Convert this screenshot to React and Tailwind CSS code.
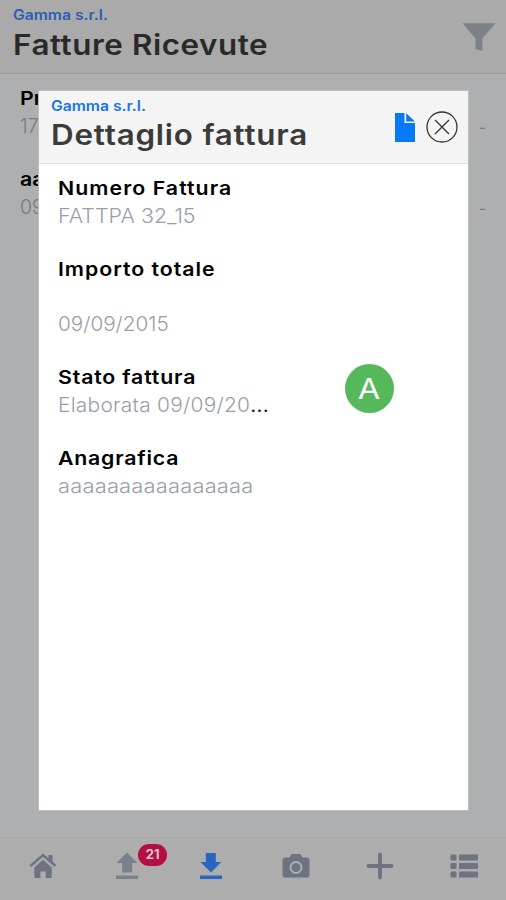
import React from 'react';

const invoices = [
  { id: 1, name: 'Pr', date: '17' },
  { id: 2, name: 'aa', date: '09' },
];

const HomeIcon = () => (
  <svg width="28" height="28" viewBox="0 0 28 28" fill="none">
    <path d="M1.5 14L14 3L26.5 14" stroke="#6d7380" strokeWidth="2.4" />
    <path d="M19.5 3H23.5V10.8L19.5 7.3Z" fill="#6d7380" />
    <path d="M5.3 15.4L14 7.7L22.7 15.4V25.2Q22.7 26 21.9 26H16.8V19.5H11.4V26H6.1Q5.3 26 5.3 25.2Z" fill="#6d7380" />
  </svg>
);

const UploadIcon = () => (
  <svg width="24" height="28" viewBox="0 0 24 28" fill="#7b808a">
    <path d="M12 0.5L22.5 11H17.2V20.5H7.2V11H1.5Z" />
    <path d="M1 23.5H23V27H1Z" />
  </svg>
);

const DownloadIcon = () => (
  <svg width="24" height="28" viewBox="0 0 24 28" fill="#2966c4">
    <path d="M6.8 1H16.8V10H22.3L12 20.5L1.5 10H6.8Z" />
    <path d="M1 23.5H23V27H1Z" />
  </svg>
);

const CameraIcon = () => (
  <svg width="28" height="26" viewBox="0 0 28 26">
    <path d="M3 4.5H7.5L9.3 1.6Q9.8 1 10.6 1H17.4Q18.2 1 18.7 1.6L20.5 4.5H25Q27.5 4.5 27.5 7V22Q27.5 24.5 25 24.5H3Q.5 24.5 .5 22V7Q.5 4.5 3 4.5Z" fill="#6d7380" />
    <circle cx="14" cy="14.5" r="5.5" fill="none" stroke="#adafb2" strokeWidth="2" />
  </svg>
);

const PlusIcon = () => (
  <svg width="28" height="28" viewBox="0 0 28 28" stroke="#6d7380" strokeWidth="3.8" strokeLinecap="round">
    <path d="M14 2.5V25.5M2.5 14H25.5" />
  </svg>
);

const ListIcon = () => (
  <svg width="28" height="24" viewBox="0 0 28 24" fill="#6d7380">
    <rect x="0.5" y="0.5" width="6" height="6" rx="1.2" />
    <rect x="9" y="0.5" width="19" height="6" rx="0.6" />
    <rect x="0.5" y="9" width="6" height="6" rx="1.2" />
    <rect x="9" y="9" width="19" height="6" rx="0.6" />
    <rect x="0.5" y="17.5" width="6" height="6" rx="1.2" />
    <rect x="9" y="17.5" width="19" height="6" rx="0.6" />
  </svg>
);

const FilterIcon = () => (
  <svg width="34" height="28" viewBox="0 0 34 28" fill="#7c8087">
    <path d="M0.5 0.3H33.5L20.3 15.5V28L13.5 26V15.5Z" />
  </svg>
);

const FileIcon = () => (
  <svg width="20" height="29" viewBox="0 0 20 29" fill="#0678fb">
    <path d="M0 0H9.5V10H20V29H0Z" />
    <path d="M11.2 0.3L20 8.6H11.2Z" />
  </svg>
);

const CloseIcon = () => (
  <svg width="32" height="32" viewBox="0 0 32 32" fill="none" stroke="#333333" strokeWidth="1.3">
    <circle cx="16" cy="16" r="15" />
    <path d="M9 9L23 23M23 9L9 23" />
  </svg>
);

const Company = ({ className }) => (
  <div className={`mt-[6px] w-fit origin-left scale-x-[1.12] text-[14px] leading-[18px] font-semibold ${className}`}>Gamma s.r.l.</div>
);

const Title = ({ children, className }) => (
  <div className={`w-fit origin-left scale-x-[1.12] text-[28px] font-semibold whitespace-nowrap ${className}`}>{children}</div>
);

const Label = ({ children, className = '' }) => (
  <div className={`h-[27px] w-fit origin-left scale-x-[1.12] text-[19px] leading-[27px] font-semibold text-black whitespace-nowrap ${className}`}>{children}</div>
);

const Value = ({ children, className = '' }) => (
  <div className={`h-[27px] w-fit origin-left text-[19.5px] leading-[28px] font-light text-[#989eaa] whitespace-nowrap ${className}`}>{children}</div>
);

const InvoiceModal = () => (
  <div className="absolute left-[38px] top-[90px] flex h-[721px] w-[431px] flex-col border border-[#bcbdbd] bg-white">
    <div className="flex h-[73px] justify-between border-b border-[#dfdfdf] bg-[#f4f4f4] pl-3 pr-[10px]">
      <div>
        <Company className="text-[#1873ee]" />
        <Title className="leading-[41px] tracking-[0.7px] text-[#3b3b3b]">Dettaglio fattura</Title>
      </div>
      <div className="flex items-center gap-[11px]">
        <FileIcon />
        <CloseIcon />
      </div>
    </div>
    <div className="flex flex-col gap-[27px] px-[19px] pt-[11px]">
      <div>
        <Label className="tracking-[0.95px]">Numero Fattura</Label>
        <Value className="scale-x-[1.1]">FATTPA 32_15</Value>
      </div>
      <div>
        <Label className="tracking-[0.87px]">Importo totale</Label>
        <Value />
        <Value className="scale-x-[1.06]">09/09/2015</Value>
      </div>
      <div className="flex">
        <div className="w-[287px]">
          <Label className="tracking-[0.75px]">Stato fattura</Label>
          <Value className="scale-x-[1.07] tracking-[0.25px]">Elaborata 09/09/20<span className="font-normal text-[#222]">...</span></Value>
        </div>
        <div className="-mb-3 flex h-[49px] w-[49px] items-center justify-center rounded-full bg-[#55b95b] text-[29px] text-white">
          <span className="scale-x-[1.12]">A</span>
        </div>
      </div>
      <div>
        <Label className="tracking-[0.7px]">Anagrafica</Label>
        <Value className="scale-x-[1.12] tracking-[0.2px]">aaaaaaaaaaaaaaaa</Value>
      </div>
    </div>
  </div>
);

export default function App() {
  return (
    <div className="relative flex h-[900px] w-[506px] flex-col overflow-hidden bg-[#aeafb0] font-['Inter',sans-serif]">
      <header className="flex h-[74px] justify-between border-b border-[#999b9c] bg-[#aaaaaa] pl-[13px] pr-[10px]">
        <div>
          <Company className="text-[#295fb5]" />
          <Title className="leading-[43px] tracking-[0.5px] text-[#292929]">Fatture Ricevute</Title>
        </div>
        <div className="pt-[23px]">
          <FilterIcon />
        </div>
      </header>

      <main className="flex-1 pt-[11px]">
        {invoices.map(inv => (
          <div key={inv.id} className="flex h-[81px] justify-between pl-5 pr-[20px]">
            <div>
              <Label>{inv.name}</Label>
              <div className="text-[19.5px] leading-[28px] font-light text-[#777b82]">{inv.date}</div>
            </div>
            <div className="pt-[28px] text-[16px] leading-[28px] text-[#777b82]">-</div>
          </div>
        ))}
      </main>

      <nav className="grid h-[63px] grid-cols-6 border-t border-[#a2a3a3] bg-[#adadad] pb-[6px] pl-px">
        <div className="flex items-center justify-center"><HomeIcon /></div>
        <div className="relative flex items-center justify-center">
          <UploadIcon />
          <span className="absolute left-[53px] top-[6px] flex h-[22px] w-[29px] items-center justify-center rounded-full bg-[#b50e43] text-[13px] font-bold text-[#d8c8cd]">21</span>
        </div>
        <div className="flex items-center justify-center"><DownloadIcon /></div>
        <div className="flex items-center justify-center"><CameraIcon /></div>
        <div className="flex items-center justify-center"><PlusIcon /></div>
        <div className="flex items-center justify-center"><ListIcon /></div>
      </nav>

      <InvoiceModal />
    </div>
  );
}
